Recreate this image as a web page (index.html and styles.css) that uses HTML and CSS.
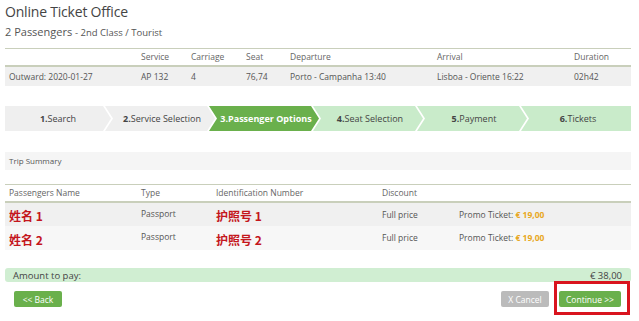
FILE: index.html
```html
<!DOCTYPE html>
<html lang="en">
<head>
  <meta charset="UTF-8">
  <title>Online Ticket Office</title>
  <link rel="stylesheet" href="styles.css">
</head>
<body>
  <div class="page">
    <h1>Online Ticket Office</h1>
    <p class="subtitle">2 Passengers <small>- 2nd Class / Tourist</small></p>

    <!-- Trip -->
    <table class="grid trip">
      <colgroup>
        <col style="width:132px"><col style="width:50px"><col style="width:55px"><col style="width:44px">
        <col style="width:147px"><col style="width:137px"><col>
      </colgroup>
      <thead>
        <tr><th></th><th>Service</th><th>Carriage</th><th>Seat</th><th>Departure</th><th>Arrival</th><th>Duration</th></tr>
      </thead>
      <tbody>
        <tr><td>Outward: 2020-01-27</td><td>AP 132</td><td>4</td><td>76,74</td><td>Porto - Campanha 13:40</td><td>Lisboa - Oriente 16:22</td><td>02h42</td></tr>
      </tbody>
    </table>

    <!-- Steps -->
    <div class="steps">
      <div class="step done"><b>1.</b>Search</div>
      <div class="step done"><b>2.</b>Service Selection</div>
      <div class="step current"><b>3.</b>Passenger Options</div>
      <div class="step next"><b>4.</b>Seat Selection</div>
      <div class="step next"><b>5.</b>Payment</div>
      <div class="step next last"><b>6.</b>Tickets</div>
    </div>

    <div class="summary">Trip Summary</div>

    <!-- Passengers -->
    <table class="grid passengers">
      <colgroup>
        <col style="width:132px"><col style="width:75px"><col style="width:166px"><col style="width:77px"><col>
      </colgroup>
      <thead>
        <tr><th>Passengers Name</th><th>Type</th><th>Identification Number</th><th>Discount</th><th></th></tr>
      </thead>
      <tbody>
        <tr><td class="cjk">姓名 1</td><td class="top">Passport</td><td class="cjk">护照号 1</td><td>Full price</td><td>Promo Ticket: <span class="price">€ 19,00</span></td></tr>
        <tr><td class="cjk">姓名 2</td><td class="top">Passport</td><td class="cjk">护照号 2</td><td>Full price</td><td>Promo Ticket: <span class="price">€ 19,00</span></td></tr>
      </tbody>
    </table>

    <div class="amount">
      <span>Amount to pay:</span>
      <span>€ 38,00</span>
    </div>

    <div class="actions">
      <button class="btn green back">&lt;&lt; Back</button>
      <div class="right">
        <button class="btn grey">X Cancel</button>
        <span class="highlight"><button class="btn green">Continue &gt;&gt;</button></span>
      </div>
    </div>
  </div>
</body>
</html>
```

FILE: styles.css
```css
body { margin: 0; background: #fff; font-family: "Open Sans", "Noto Sans CJK SC", sans-serif; color: #555; }
.page { width: 626px; margin: 0 0 0 5px; }

h1 { font-size: 14px; font-weight: normal; color: #444; margin: 0; padding-top: 2px; line-height: 20px; letter-spacing: -0.2px; }
.subtitle { font-size: 11px; color: #555; margin: 2px 0 0; line-height: 16px; }
.subtitle small { font-size: 9.5px; }

/* tables */
.grid { width: 100%; border-collapse: collapse; table-layout: fixed; font-size: 8.5px; line-height: 12px; }
.grid th { font-weight: normal; text-align: left; color: #666; padding: 0 4px; height: 16px;
  border-top: 1px solid #c9cfbb; border-bottom: 2px solid #c9cfbb; }
.grid td { padding: 0 4px; color: #555; }
.trip { margin-top: 7px; }
.trip td { height: 19px; background: #f0f0f0; }

/* steps */
.steps { display: flex; margin-top: 20px; height: 25px; }
.step { flex: 1; display: flex; align-items: center; justify-content: center; font-size: 9px; color: #444;
  margin-left: -6px; padding-left: 4px; white-space: nowrap;
  clip-path: polygon(0 0, calc(100% - 8px) 0, 100% 50%, calc(100% - 8px) 100%, 0 100%, 8px 50%); }
.step:first-child { margin-left: 0; padding-left: 0; clip-path: polygon(0 0, calc(100% - 8px) 0, 100% 50%, calc(100% - 8px) 100%, 0 100%); }
.step.last { clip-path: polygon(0 0, 100% 0, 100% 100%, 0 100%, 8px 50%); }
.step b { font-weight: bold; }
.step.done { background: #efefef; }
.step.current { background: #6ab04c; color: #fff; font-weight: bold; }
.step.next { background: #c9ebca; }

.summary { margin-top: 21px; background: #f5f5f5; height: 18px; line-height: 18px; padding-left: 4px; font-size: 8px; color: #555; }

.passengers { margin-top: 14px; }
.passengers tbody tr { height: 24px; }
.passengers td { height: auto; padding-top: 0; padding-bottom: 0; }
.passengers tbody tr:nth-child(1) td { background: #f0f0f0; }
.passengers tbody tr:nth-child(2) td { background: #f7f7f7; }
.passengers td.top { vertical-align: top; padding-top: 5px; }
.cjk { color: #c4161c !important; font-weight: bold; font-size: 12px; line-height: 12px; padding-top: 3px !important; font-family: "Noto Sans CJK SC", sans-serif; }
.price { color: #e8a824; font-weight: bold; }

.amount { margin-top: 18px; background: #d0eed2; border-radius: 3px; height: 14px; display: flex; justify-content: space-between;
  align-items: center; padding: 0 9px 0 8px; font-size: 9.5px; color: #444; }

.actions { display: flex; justify-content: space-between; align-items: flex-start; margin-top: -1px; padding-left: 9px; }
.right { display: flex; align-items: flex-start; }
.btn { border: none; border-radius: 2px; color: #fff; font-family: inherit; font-size: 8.5px; height: 16px; padding: 0; cursor: pointer; }
.btn.green { background: #6ab04c; }
.btn.back { width: 48px; margin-top: 10px; }
.btn.grey { background: #bbb; width: 48px; margin-top: 10px; margin-right: 5px; }
.highlight { border: 3px solid #d9141e; padding: 7px 6px 5px 2px; display: inline-block; margin-right: 1px; position: relative; }
.highlight .btn { width: 62px; display: block; }
```
